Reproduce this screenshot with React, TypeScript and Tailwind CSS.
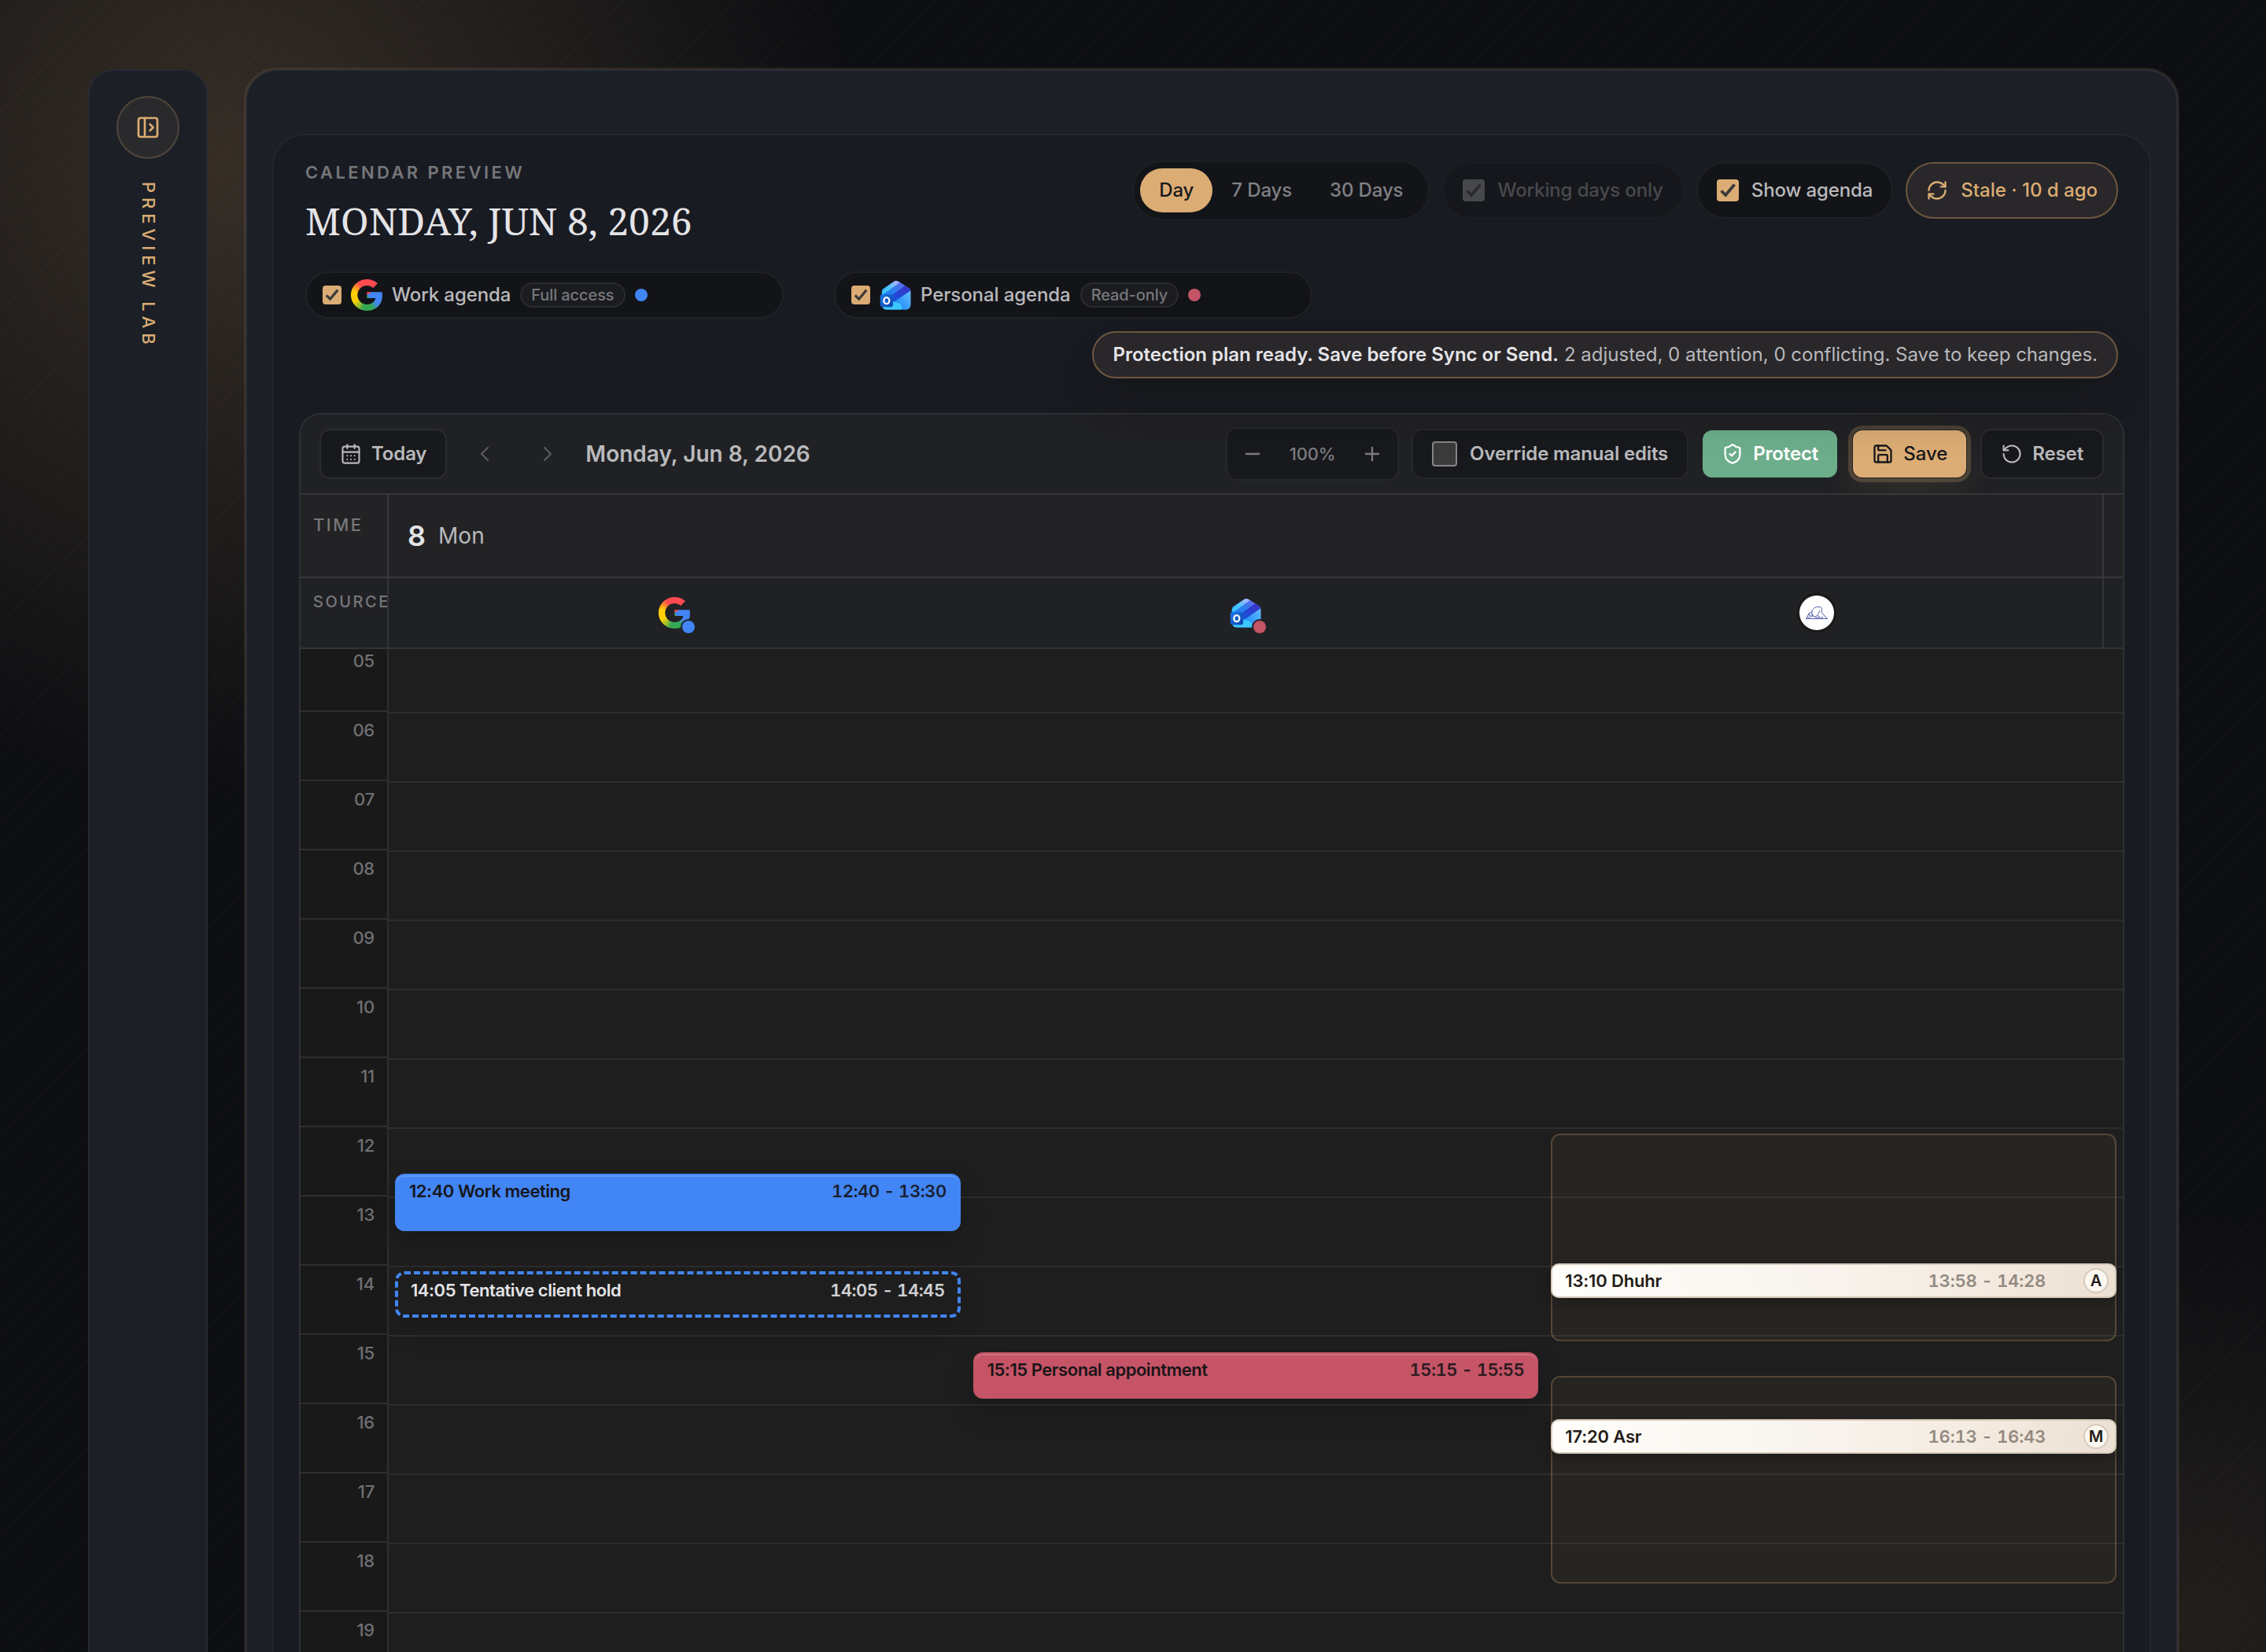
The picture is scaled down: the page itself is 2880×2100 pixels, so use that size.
import React from 'react';
import {
  CalendarDays,
  ChevronLeft,
  ChevronRight,
  Minus,
  PanelLeftOpen,
  Plus,
  RefreshCw,
  RotateCcw,
  Save,
  ShieldCheck,
} from 'lucide-react';

const HOURS = ['05', '06', '07', '08', '09', '10', '11', '12', '13', '14', '15', '16', '17', '18', '19'];

function GoogleIcon() {
  return (
    <span className="block h-10 w-10 shrink-0 bg-[conic-gradient(#ff4a4f_0deg,#ff4a4f_60deg,#4285f4_61deg,#4285f4_128deg,#34a853_158deg,#34a853_195deg,#a0c02a_218deg,#fdd003_242deg,#ffcf05_285deg,#ff8a2a_308deg,#ff4a4f_328deg)] [clip-path:url(#google-g)]" />
  );
}

function GoogleClip() {
  return (
    <svg width="0" height="0" className="absolute">
      <clipPath id="google-g" clipPathUnits="objectBoundingBox">
        <path
          transform="scale(0.0463 0.04545) translate(-1 -1)"
          d="M22.56 12.25c0-.78-.07-1.53-.2-2.25H12v4.26h5.92c-.26 1.37-1.04 2.53-2.21 3.31-.98.66-2.23 1.06-3.71 1.06-2.86 0-5.29-1.93-6.16-4.53-.22-.66-.35-1.36-.35-2.09s.13-1.43.35-2.09c.87-2.6 3.3-4.53 6.16-4.53 1.62 0 3.06.56 4.21 1.64l3.15-3.15C17.45 2.09 14.97 1 12 1 7.7 1 3.99 3.47 2.18 7.07 1.43 8.55 1 10.22 1 12s.43 3.45 1.18 4.93C3.99 20.53 7.7 23 12 23c2.97 0 5.46-.98 7.28-2.66 2.08-1.92 3.28-4.74 3.28-8.09z"
        />
      </clipPath>
    </svg>
  );
}

function OutlookIcon({ id }: { id: string }) {
  return (
    <svg viewBox="0 0 40 40" className="block h-10 w-10 shrink-0">
      <defs>
        <clipPath id={`${id}-body`}>
          <path d="M2.800 15.500c0-2 .8-3.200 2.300-4.100L18.600 2.800c1.700-1 3.400-1 5 0l13.500 8.500c1.500.9 2.200 2.100 2.200 4V32c0 4-2.200 6.500-6.200 6.500H9c-4 0-6.200-2.500-6.200-6.500z" />
        </clipPath>
        <linearGradient id={`${id}-top`} x1="0" y1="1" x2="1" y2="0">
          <stop offset="0" stopColor="#22c3fb" />
          <stop offset=".5" stopColor="#4fc4fb" />
          <stop offset=".8" stopColor="#a9b4ff" />
          <stop offset="1" stopColor="#7d7cf5" />
        </linearGradient>
        <linearGradient id={`${id}-band`} x1="0" y1="1" x2="1" y2="0">
          <stop offset="0" stopColor="#1b7df0" />
          <stop offset=".5" stopColor="#2a80ee" />
          <stop offset="1" stopColor="#6d63ea" />
        </linearGradient>
        <linearGradient id={`${id}-dark`} x1="0" y1="1" x2="1" y2="0">
          <stop offset="0" stopColor="#1257dd" />
          <stop offset="1" stopColor="#3f2fc8" />
        </linearGradient>
        <linearGradient id={`${id}-right`} x1="0" y1="1" x2="1" y2="0">
          <stop offset="0" stopColor="#0f86f4" />
          <stop offset="1" stopColor="#68bcff" />
        </linearGradient>
        <linearGradient id={`${id}-badge`} x1="0" y1="0" x2="1" y2="1">
          <stop offset="0" stopColor="#1a7be6" />
          <stop offset="1" stopColor="#0f3fae" />
        </linearGradient>
      </defs>
      <g clipPath={`url(#${id}-body)`}>
        <rect width="40" height="40" fill={`url(#${id}-right)`} />
        <path d="M0 18 20 0l8 5L4 24H0z" fill={`url(#${id}-top)`} />
        <path d="M2 21 26.500 3.500l7 4.900L12 25z" fill={`url(#${id}-band)`} />
        <path d="M12 22.500 32.500 8l7.500 5v1L19 28.500z" fill={`url(#${id}-dark)`} />
        <path d="M16 29.500c6-1 12 1 12 6V40H4V28z" fill="#3cc8fd" />
        <path d="M19 28.500 40 14v26H29c2-6-2-10-9-11z" fill={`url(#${id}-right)`} />
      </g>
      <rect x=".7" y="19" width="16.300" height="16.300" rx="3" fill={`url(#${id}-badge)`} />
      <ellipse cx="8.800" cy="27.100" rx="3.500" ry="4" fill="none" stroke="#fff" strokeWidth="2.300" />
    </svg>
  );
}

function PrayerLogo() {
  return (
    <span className="flex h-11 w-11 items-center justify-center rounded-full bg-white shadow-[0_0_0_4px_#1a1a1b,0_0_0_5px_#2b2521]">
      <svg viewBox="0 0 30 18" className="h-[18px] w-[30px]" fill="none" stroke="#4f5eaa" strokeWidth="1">
        <path d="M1 16.500h28M2 16l3-6 2 5M5 10c1-2 4-1 4-3 1-4 6-7 11-5 2 1 2 4 1 6M9 7c-1 3 1 5 3 7M21 8c1 3 3 2 4 5l3 3M12 14c3 0 5-3 7-8M16 12l3 3h4M7 13h4M13 15h5M3 14l3 2M8 10l3 4" />
      </svg>
    </span>
  );
}

function Checkbox({ className, mark = 'text-[#3b3b3b]' }: { className: string; mark?: string }) {
  return (
    <span className={`block shrink-0 rounded-[4px] ${className}`}>
      <svg viewBox="0 0 24 24" className={`block h-full w-full ${mark}`} fill="none" stroke="currentColor" strokeWidth="3.2">
        <path d="M4.800 12.400 9.600 17.200 19.300 5.600" />
      </svg>
    </span>
  );
}

function AgendaPill({ icon, name, access, dot }: { icon: React.ReactNode; name: string; access: string; dot: string }) {
  return (
    <div className="flex h-[60px] w-[608px] items-center gap-3 rounded-full border-2 border-[#212226] bg-[#131418] px-5 font-medium tracking-[-0.006em]">
      <Checkbox className="h-6 w-6 bg-[#dbac74]" />
      {icon}
      <span className="text-[24px] text-[#b9b9bc]">{name}</span>
      <span className="flex h-8 items-center rounded-full border-2 border-[#2a2b2f] bg-[#1b1c20] px-3 text-[20px] text-[#77787c]">
        {access}
      </span>
      <span className={`h-4 w-4 rounded-full ${dot}`} />
    </div>
  );
}

function CardHeader() {
  return (
    <div className="px-2">
      <div className="flex h-[141px] items-start justify-between">
        <div>
          <p className="text-[22px] leading-[30px] font-semibold tracking-[0.154em] text-[#76777a]">CALENDAR PREVIEW</p>
          <h1 className="mt-[17px] font-['Noto_Serif','Liberation_Serif',serif] text-[48px] leading-[60px] text-[#e4e4e7]">
            MONDAY, JUN 8, 2026
          </h1>
        </div>
        <div className="flex items-center gap-4 text-[24px] font-medium tracking-[-0.005em]">
          <div className="flex h-[76px] items-center rounded-full border-2 border-[#1e1f24] bg-[#131418] px-2 text-[#808185]">
            <span className="flex h-14 items-center rounded-full bg-[#dbac74] px-6 text-[#18181b]">Day</span>
            <span className="px-6">7 Days</span>
            <span className="px-6">30 Days</span>
          </div>
          <label className="flex h-[72px] items-center gap-4 rounded-full border-2 border-[#1c1d21] bg-[#16171c] px-6 text-[#48494d]">
            <Checkbox className="h-7 w-7 bg-[#47484b]" mark="text-[#2a2b2e]" />
            Working days only
          </label>
          <label className="flex h-[72px] items-center gap-4 rounded-full border-2 border-[#202125] bg-[#131418] px-6 text-[#b9b9bc]">
            <Checkbox className="h-7 w-7 bg-[#dbac74]" />
            Show agenda
          </label>
          <div className="flex h-[72px] items-center gap-4 rounded-full border-2 border-[#6d573f] bg-[#29272a] px-6 tracking-normal text-[#dbac74]">
            <RefreshCw size={28} />
            Stale · 10 d ago
          </div>
        </div>
      </div>
      <div className="flex gap-16">
        <AgendaPill icon={<GoogleIcon />} name="Work agenda" access="Full access" dot="bg-[#4285f4]" />
        <AgendaPill icon={<OutlookIcon id="ol-pill" />} name="Personal agenda" access="Read-only" dot="bg-[#c55467]" />
      </div>
      <div className="mt-4 flex justify-end">
        <p className="relative z-10 flex h-[60px] items-center gap-[7px] rounded-[30px] border-2 border-[#6d573f] bg-[#29272a] px-6 text-[24px] text-[#b9b9bc] shadow-[0_28px_60px_rgba(20,20,20,0.55)]">
          <strong className="font-semibold text-[#e4e4e7]">Protection plan ready. Save before Sync or Send.</strong>
          <span>2 adjusted, 0 attention, 0 conflicting. Save to keep changes.</span>
        </p>
      </div>
    </div>
  );
}

function Toolbar() {
  return (
    <div className="flex h-[102px] items-center justify-between border-b-2 border-[#343538] bg-[#202124] px-6 text-[24px] font-semibold tracking-[-0.006em] text-[#b9b9bc]">
      <div className="flex items-center gap-4">
        <button className="flex h-16 items-center gap-3 rounded-[14px] border-2 border-[#2b2c2f] bg-[#18191c] px-6">
          <CalendarDays size={28} strokeWidth={1.8} />
          Today
        </button>
        <button className="flex h-16 w-16 items-center justify-center text-[#58595c]">
          <ChevronLeft size={32} strokeWidth={1.8} />
        </button>
        <button className="flex h-16 w-16 items-center justify-center text-[#58595c]">
          <ChevronRight size={32} strokeWidth={1.8} />
        </button>
        <h2 className="text-[28px] tracking-normal">Monday, Jun 8, 2026</h2>
      </div>
      <div className="flex items-center gap-4">
        <div className="flex h-[68px] items-center rounded-[14px] border-2 border-[#26272a] bg-[#18191c] px-1 text-[22px] font-medium text-[#7c7d80]">
          <span className="flex w-14 justify-center">
            <Minus size={28} />
          </span>
          <span className="w-24 text-center">100%</span>
          <span className="flex w-14 justify-center">
            <Plus size={28} />
          </span>
        </div>
        <label className="flex h-16 items-center gap-4 rounded-[14px] border-2 border-[#26272a] bg-[#18191c] px-6">
          <span className="h-8 w-8 rounded-[4px] border-2 border-[#858585] bg-[#3b3b3b]" />
          Override manual edits
        </label>
        <button className="flex h-16 items-center gap-3 rounded-[14px] border-2 border-transparent bg-[#6cae8b] bg-clip-padding px-6 text-white">
          <ShieldCheck size={28} />
          Protect
        </button>
        <button className="flex h-16 items-center gap-3 rounded-[14px] border-2 border-transparent bg-[#dbac74] bg-clip-padding px-6 font-medium tracking-normal text-[#18181b] shadow-[0_0_0_4px_rgba(219,172,116,0.22),0_16px_44px_rgba(219,172,116,0.1)]">
          <Save size={28} />
          Save
        </button>
        <button className="flex h-16 items-center gap-3 rounded-[14px] border-2 border-[#2b2c2f] bg-[#18191c] px-6">
          <RotateCcw size={28} strokeWidth={1.8} />
          Reset
        </button>
      </div>
    </div>
  );
}

function SourceBadge({ children, dot }: { children: React.ReactNode; dot?: string }) {
  return (
    <div className="flex flex-1 items-center justify-center">
      <span className="relative">
        {children}
        {dot && <span className={`absolute -right-1.5 -bottom-1.5 h-4 w-4 rounded-full shadow-[0_0_0_2px_#202124] ${dot}`} />}
      </span>
    </div>
  );
}

function GridHeader() {
  return (
    <>
      <div className="flex h-[106px] border-b-2 border-[#38383a] bg-[#232325]">
        <div className="w-[112px] border-r-2 border-[#38383a] pt-[23px] pl-4 text-[22px] leading-[30px] font-medium tracking-[0.11em] text-[#77777a]">
          TIME
        </div>
        <div className="flex w-[2180px] items-center gap-4 border-r-2 border-[#38383a] pl-6">
          <span className="text-[36px] font-semibold text-[#e4e4e7]">8</span>
          <span className="text-[28px] text-[#b9b9bc]">Mon</span>
        </div>
      </div>
      <div className="flex h-[90px] border-b-2 border-[#343538] bg-[#202124]">
        <div className="w-[112px] border-r-2 border-[#343538] pt-[15px] pl-4 text-[20px] leading-[30px] font-medium tracking-[0.125em] whitespace-nowrap text-[#77777a]">
          SOURCE
        </div>
        <div className="flex w-[2180px] border-r-2 border-[#343538]">
          <SourceBadge dot="bg-[#4285f4]">
            <GoogleIcon />
          </SourceBadge>
          <SourceBadge dot="bg-[#c55467]">
            <OutlookIcon id="ol-col" />
          </SourceBadge>
          <SourceBadge>
            <PrayerLogo />
          </SourceBadge>
        </div>
      </div>
    </>
  );
}

function AgendaEvent({ title, time, className }: { title: string; time: string; className: string }) {
  return (
    <div
      className={`absolute inset-x-2 flex items-start justify-between rounded-[12px] px-4 pt-[5px] text-[22px] leading-[30px] font-semibold tracking-[-0.021em] ${className}`}
    >
      <span>{title}</span>
      <span className="tabular-nums opacity-90">{time}</span>
    </div>
  );
}

function PrayerEvent({ title, time, mode, className }: { title: string; time: string; mode: string; className: string }) {
  return (
    <div
      className={`absolute inset-x-2 flex h-11 items-center rounded-[10px] border-2 border-[#d6cabb] bg-[linear-gradient(105deg,#fffefb_0%,#f8f3ec_50%,#f3e9de_80%,#ebe0d2_100%)] pr-2 pl-4 text-[22px] font-semibold tracking-[-0.008em] text-[#231c17] shadow-[0_6px_16px_rgba(0,0,0,0.25)] ${className}`}
    >
      <span className="flex-1">{title}</span>
      <span className="mr-12 tabular-nums text-[#938a81]">{time}</span>
      <span className="flex h-8 w-8 items-center justify-center rounded-full border-2 border-[#d6cabb] bg-[#fbf7f1] text-[20px]">
        {mode}
      </span>
    </div>
  );
}

function DayGrid() {
  return (
    <div className="flex-1 overflow-hidden">
      <div className="-mt-2 flex">
        <div className="w-[112px] shrink-0 border-r-2 border-[#2f2f30] bg-[#191919]">
          {HOURS.map((hour) => (
            <div
              key={hour}
              className="h-[88px] border-b-2 border-[#2f2f30] pt-2 pr-4 text-right text-[22px] leading-[30px] font-medium tracking-[-0.01em] text-[#707073]"
            >
              {hour}
            </div>
          ))}
        </div>
        <div className="relative flex-1 bg-[#1e1e1e]">
          {HOURS.map((hour) => (
            <div key={hour} className="h-[88px] border-t-2 border-[#2d2d2e]" />
          ))}
          {/* events sit on the hour grid, 88px per hour starting at 05:00 */}
          <div className="absolute inset-0 grid grid-cols-3">
            <div className="relative">
              <AgendaEvent
                title="12:40 Work meeting"
                time="12:40 - 13:30"
                className="top-[674.67px] h-[73.33px] border-2 border-[#4285f4] bg-[#4285f4] text-[#15171c] shadow-[inset_0_2px_0_rgba(255,255,255,0.16),0_16px_36px_rgba(0,0,0,0.2)]"
              />
              <AgendaEvent
                title="14:05 Tentative client hold"
                time="14:05 - 14:45"
                className="top-[799.33px] h-[58.67px] border-4 border-dashed border-[#4285f4] bg-[#1e1e1e] text-[#e4e4e7] shadow-[0_16px_36px_rgba(0,0,0,0.14)]"
              />
            </div>
            <div className="relative">
              <AgendaEvent
                title="15:15 Personal appointment"
                time="15:15 - 15:55"
                className="top-[902px] h-[58.67px] border-2 border-[#c55467] bg-[#c55467] text-[#1a1518] shadow-[inset_0_2px_0_rgba(255,255,255,0.16),0_16px_36px_rgba(0,0,0,0.2)]"
              />
            </div>
            <div className="relative">
              <div className="absolute inset-x-2 top-[624px] h-[264px] rounded-[12px] border-2 border-[#dbac74]/25 bg-[#dbac74]/5" />
              <div className="absolute inset-x-2 top-[932px] h-[264px] rounded-[12px] border-2 border-[#dbac74]/25 bg-[#dbac74]/5" />
              <PrayerEvent title="13:10 Dhuhr" time="13:58 - 14:28" mode="A" className="top-[789px]" />
              <PrayerEvent title="17:20 Asr" time="16:13 - 16:43" mode="M" className="top-[987px]" />
            </div>
          </div>
        </div>
      </div>
    </div>
  );
}

function SideRail() {
  return (
    <aside className="flex w-[152px] flex-col items-center rounded-t-[32px] border-2 border-b-0 border-[#262a33] bg-[#1c1f26] pt-8">
      <span className="flex h-20 w-20 items-center justify-center rounded-full border-2 border-[#50453b] bg-[#2a2a2c] text-[#dbac74]">
        <PanelLeftOpen size={32} />
      </span>
      <span className="mt-[29px] text-[22px] font-medium tracking-[0.272em] text-[#dbac74] [writing-mode:vertical-rl]">
        PREVIEW LAB
      </span>
    </aside>
  );
}

export default function App() {
  return (
    <div className="h-[2100px] w-[2880px] overflow-hidden bg-[#0d0e12] bg-[repeating-linear-gradient(135deg,rgba(255,255,255,0.01)_0px,rgba(255,255,255,0.01)_2px,transparent_2px,transparent_20px),radial-gradient(circle_at_288px_210px,rgba(219,172,116,0.2),transparent_800px),radial-gradient(circle_at_2800px_2060px,rgba(219,172,116,0.1),transparent_520px)] font-['Inter',sans-serif]">
      <GoogleClip />
      <div className="flex h-full gap-12 px-28 pt-[88px]">
        <SideRail />
        <main className="flex flex-1 flex-col rounded-t-[40px] border-2 border-b-0 border-[#2c2f36] bg-[#1c1f26] px-8 pt-20 shadow-[0_0_0_2px_rgba(219,172,116,0.12)]">
          <section className="flex flex-1 flex-col rounded-t-[40px] border-2 border-b-0 border-[#23262b] bg-[#191b22] px-8 pt-8">
            <CardHeader />
            <div className="mt-11 flex flex-1 flex-col overflow-hidden rounded-t-[28px] border-2 border-b-0 border-[#303134]">
              <Toolbar />
              <GridHeader />
              <DayGrid />
            </div>
          </section>
        </main>
      </div>
    </div>
  );
}
